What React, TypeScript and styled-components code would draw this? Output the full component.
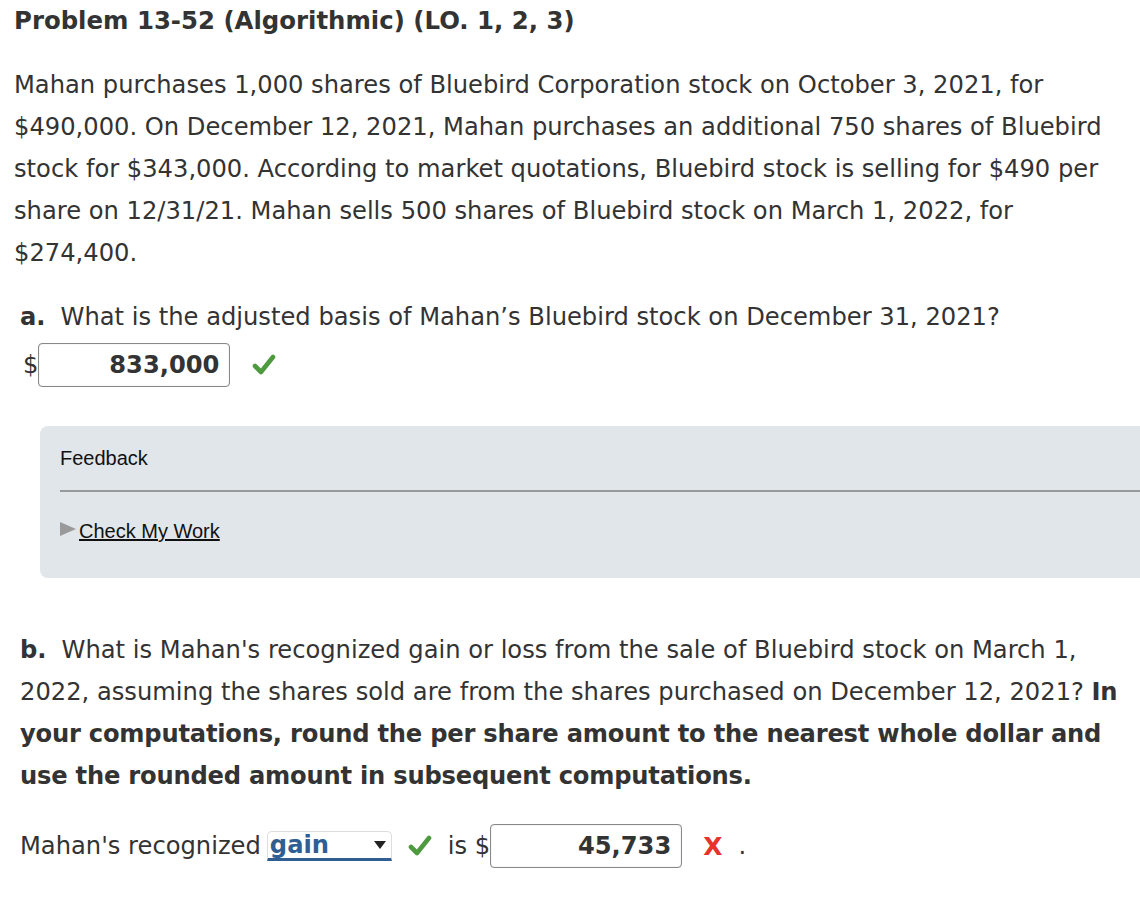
import React from "react";
import styled, { createGlobalStyle } from "styled-components";

const GlobalStyle = createGlobalStyle`
    html, body {
        margin: 0;
        padding: 0;
        background: #ffffff;
    }
    body {
        font-family: "DejaVu Sans", Verdana, sans-serif;
        color: #333333;
        overflow: hidden;
    }
`;

const Page = styled.div`
    width: 1140px;
    padding: 6px 0 0 14px;
    box-sizing: border-box;
`;

const Title = styled.h1`
    margin: 0;
    font-size: 24.4px;
    font-weight: bold;
    line-height: 30px;
    color: #333333;
    white-space: nowrap;
`;

const Paragraph = styled.p`
    margin: 28px 0 0 0;
    font-size: 24.2px;
    line-height: 42px;
    white-space: nowrap;
`;

const Part = styled.div`
    margin-left: 6px;
    margin-top: ${props => props.$top}px;
`;

const Question = styled.p`
    margin: 0;
    font-size: 24.2px;
    line-height: 42px;
    white-space: nowrap;
`;

const Label = styled.b`
    margin-right: 15px;
`;

const Emphasis = styled.b`
    letter-spacing: -0.22px;
`;

const AnswerRow = styled.div`
    display: flex;
    align-items: center;
    font-size: 24.2px;
    height: 46px;
    margin-top: ${props => props.$top || 0}px;
`;

const Dollar = styled.span`
    margin-left: ${props => props.$indent || 0}px;
`;

const AmountBox = styled.div`
    width: 192px;
    height: 44px;
    box-sizing: border-box;
    border: 1px solid #888888;
    border-radius: 4px;
    box-shadow: inset 0 0 1px #aaaaaa;
    display: flex;
    align-items: center;
    justify-content: flex-end;
    padding-right: 10px;
    font-weight: bold;
    font-size: 24.2px;
    color: #333333;
`;

const Mark = styled.span`
    display: inline-flex;
    align-items: center;
    margin: 0 ${props => props.$right}px 0 ${props => props.$left}px;
`;

const Cross = styled.span`
    font-family: "DejaVu Sans", sans-serif;
    font-weight: bold;
    color: #e8322c;
    font-size: 25px;
    margin: 0 16px 0 21px;
`;

const FeedbackBox = styled.div`
    margin: 38px 0 0 26px;
    height: 152px;
    background: #e1e6ea;
    border-radius: 8px 0 0 8px;
    padding: 18px 0 0 20px;
    box-sizing: border-box;
    font-family: "Liberation Sans", Arial, sans-serif;
    color: #111111;
`;

const FeedbackTitle = styled.div`
    font-size: 20px;
    line-height: 28px;
    padding-bottom: 18px;
    border-bottom: 2px solid #98999b;
`;

const CheckLink = styled.div`
    display: flex;
    align-items: center;
    margin-top: 26px;
    font-size: 20px;
    line-height: 26px;

    & a {
        color: #111111;
        text-decoration: underline;
        margin-left: 3px;
    }
`;

const Triangle = styled.span`
    width: 0;
    height: 0;
    border-top: 7px solid transparent;
    border-bottom: 7px solid transparent;
    border-left: 16px solid #9a9a9a;
    margin-top: -4px;
`;

const SelectBox = styled.div`
    width: 125px;
    height: 30px;
    box-sizing: border-box;
    margin-left: 6px;
    display: flex;
    align-items: center;
    justify-content: space-between;
    padding: 0 5px 0 2px;
    border: 1px solid #dddddd;
    border-bottom: 3px solid #2f5e92;
    border-radius: 5px 5px 0 0;
    font-weight: bold;
    color: #2f5e92;
    font-size: 24.2px;
`;

const Caret = styled.span`
    width: 0;
    height: 0;
    border-left: 6px solid transparent;
    border-right: 6px solid transparent;
    border-top: 8px solid #222222;
`;

const CheckIcon = () => (
    <svg width="24" height="22" viewBox="0 0 24 22">
        <path d="M3 12 L9 18 L21 3" fill="none" stroke="#4e9a3f" strokeWidth="4.6" strokeLinecap="round" strokeLinejoin="round" />
    </svg>
);

export default function App() {
    return (
        <>
            <GlobalStyle />
            <Page>
                <Title>Problem 13-52 (Algorithmic) (LO. 1, 2, 3)</Title>
                <Paragraph>
                    Mahan purchases 1,000 shares of Bluebird Corporation stock on October 3, 2021, for<br />
                    $490,000. On December 12, 2021, Mahan purchases an additional 750 shares of Bluebird<br />
                    stock for $343,000. According to market quotations, Bluebird stock is selling for $490 per<br />
                    share on 12/31/21. Mahan sells 500 shares of Bluebird stock on March 1, 2022, for<br />
                    $274,400.
                </Paragraph>
                <Part $top={22}>
                    <Question>
                        <Label>a.</Label>What is the adjusted basis of Mahan’s Bluebird stock on December 31, 2021?
                    </Question>
                    <AnswerRow $top={4}>
                        <Dollar $indent={3}>$</Dollar>
                        <AmountBox>833,000</AmountBox>
                        <Mark $left={22} $right={0}><CheckIcon /></Mark>
                    </AnswerRow>
                </Part>
                <FeedbackBox>
                    <FeedbackTitle>Feedback</FeedbackTitle>
                    <CheckLink>
                        <Triangle />
                        <a href="#">Check My Work</a>
                    </CheckLink>
                </FeedbackBox>
                <Part $top={51}>
                    <Question>
                        <Label>b.</Label>What is Mahan's recognized gain or loss from the sale of Bluebird stock on March 1,<br />
                        2022, assuming the shares sold are from the shares purchased on December 12, 2021?{" "}
                        <Emphasis>In<br />
                        your computations, round the per share amount to the nearest whole dollar and<br />
                        use the rounded amount in subsequent computations.</Emphasis>
                    </Question>
                    <AnswerRow $top={26}>
                        <span>Mahan's recognized</span>
                        <SelectBox>
                            <span>gain</span>
                            <Caret />
                        </SelectBox>
                        <Mark $left={16} $right={16}><CheckIcon /></Mark>
                        <span>is $</span>
                        <AmountBox>45,733</AmountBox>
                        <Cross>X</Cross>
                        <span>.</span>
                    </AnswerRow>
                </Part>
            </Page>
        </>
    );
}
